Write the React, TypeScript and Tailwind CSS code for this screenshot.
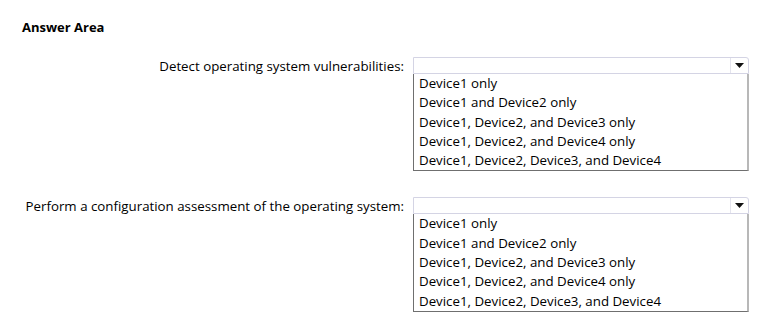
import React from "react";

const options = [
  "Device1 only",
  "Device1 and Device2 only",
  "Device1, Device2, and Device3 only",
  "Device1, Device2, and Device4 only",
  "Device1, Device2, Device3, and Device4",
];

function Question({ label }: { label: string }) {
  return (
    <div className="flex items-start">
      <div className="w-[413px] pr-[9px] pt-[1px] text-right text-[13.3px] leading-[17px] text-black">
        {label}
      </div>
      <div className="w-[336px]">
        <div className="flex h-[17px] items-center justify-end rounded-tr-[3px] border border-[#d4d4e4] bg-white">
          <div className="flex h-full w-[18px] items-center justify-center border-l border-[#e4e4ee]">
            <svg width="9" height="5" viewBox="0 0 9 5">
              <polygon points="0,0 9,0 4.5,5" fill="#111" />
            </svg>
          </div>
        </div>
        <ul className="border-b border-l border-r-2 border-[#6f6f6f] border-r-[#b8b8b8] bg-white pl-[5px] text-[13.3px] leading-[19.3px] text-black">
          {options.map((o) => (
            <li key={o}>{o}</li>
          ))}
        </ul>
      </div>
    </div>
  );
}

export default function App() {
  return (
    <div
      className="h-[324px] w-[763px] bg-white"
      style={{ fontFamily: '"Open Sans", "Noto Sans", sans-serif' }}
    >
      <div className="pl-[22px] pt-[19px] text-[13px] font-bold leading-[17px] text-black">
        Answer Area
      </div>
      <div className="mt-[21px] flex flex-col gap-[26px]">
        <Question label="Detect operating system vulnerabilities:" />
        <Question label="Perform a configuration assessment of the operating system:" />
      </div>
    </div>
  );
}
